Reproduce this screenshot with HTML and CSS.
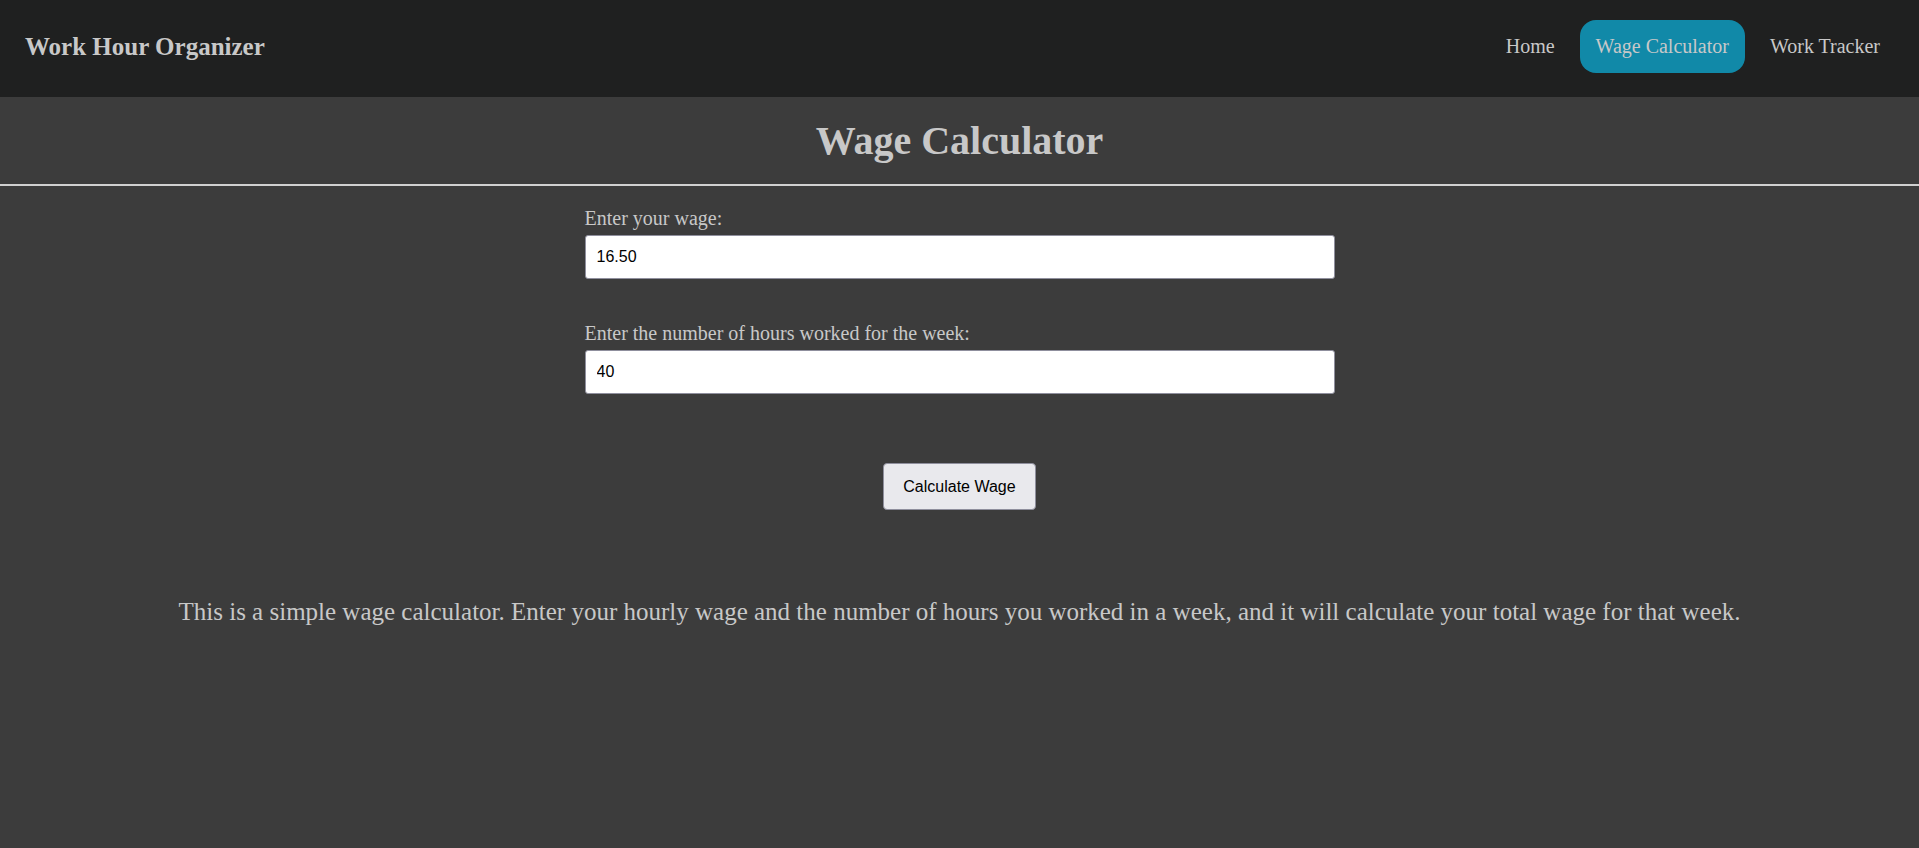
FILE: index.html
```html
<!DOCTYPE html>
<html lang="en">
<head>
<meta charset="utf-8">
<title>Wage Calculator</title>
<link rel="stylesheet" href="styles.css">
</head>
<body>
<header class="topbar">
  <div class="brand">Work Hour Organizer</div>
  <nav class="nav">
    <a class="nav-link" href="#">Home</a>
    <a class="nav-link active" href="#">Wage Calculator</a>
    <a class="nav-link" href="#">Work Tracker</a>
  </nav>
</header>
<section class="title-band">
  <h1 class="page-title">Wage Calculator</h1>
</section>
<main class="content">
  <form class="wage-form">
    <label class="field-label" for="wage">Enter your wage:</label>
    <input class="field-input" id="wage" type="text" value="16.50">
    <label class="field-label second" for="hours">Enter the number of hours worked for the week:</label>
    <input class="field-input" id="hours" type="text" value="40">
    <div class="actions">
      <button class="calc-btn" type="button">Calculate Wage</button>
    </div>
  </form>
  <p class="desc">This is a simple wage calculator. Enter your hourly wage and the number of hours you worked in a week, and it will calculate your total wage for that week.</p>
</main>
</body>
</html>
```
FILE: styles.css
```css
* { box-sizing: border-box; }
html, body {
  margin: 0;
  padding: 0;
}
body {
  background: #3c3c3c;
  color: #c8c8c8;
  font-family: "Liberation Serif", "Times New Roman", serif;
  min-height: 848px;
}
.topbar {
  background: #1f2020;
  height: 97px;
  display: flex;
  align-items: center;
  justify-content: space-between;
  padding: 0 23px 4px 25px;
}
.brand {
  font-size: 25px;
  font-weight: bold;
  color: #c8c8c8;
}
.nav {
  display: flex;
  gap: 9px;
  align-items: center;
}
.nav-link {
  font-size: 20px;
  line-height: 23px;
  padding: 15px 16px;
  color: #c8c8c8;
  text-decoration: none;
  border-radius: 16px;
}
.nav-link.active {
  background: #1189a8;
}
.title-band {
  height: 89px;
  border-bottom: 2px solid #d0d0d0;
  display: flex;
  align-items: center;
  justify-content: center;
}
.page-title {
  margin: 0;
  font-size: 40px;
  font-weight: bold;
  line-height: 46px;
  color: #c8c8c8;
}
.content {
  display: flex;
  flex-direction: column;
  align-items: center;
}
.wage-form {
  width: 750px;
  display: flex;
  flex-direction: column;
  padding-top: 21px;
}
.field-label {
  font-size: 20px;
  line-height: 23px;
  color: #c8c8c8;
  margin-bottom: 5px;
}
.field-label.second {
  margin-top: 43px;
}
.field-input {
  height: 44px;
  font-family: "Liberation Sans", Arial, sans-serif;
  font-size: 16px;
  color: #000;
  background: #fff;
  border: 1px solid #8f8f9d;
  border-radius: 3px;
  padding: 0 11px;
}
.actions {
  display: flex;
  justify-content: center;
  margin-top: 69px;
}
.calc-btn {
  font-family: "Liberation Sans", Arial, sans-serif;
  font-size: 16px;
  color: #000;
  background: #e9e9ed;
  border: 1px solid #8f8f9d;
  border-radius: 4px;
  height: 47px;
  padding: 0 19px;
}
.desc {
  margin: 87px 0 0;
  font-size: 25px;
  line-height: 29px;
  text-align: center;
  color: #c8c8c8;
}
```
